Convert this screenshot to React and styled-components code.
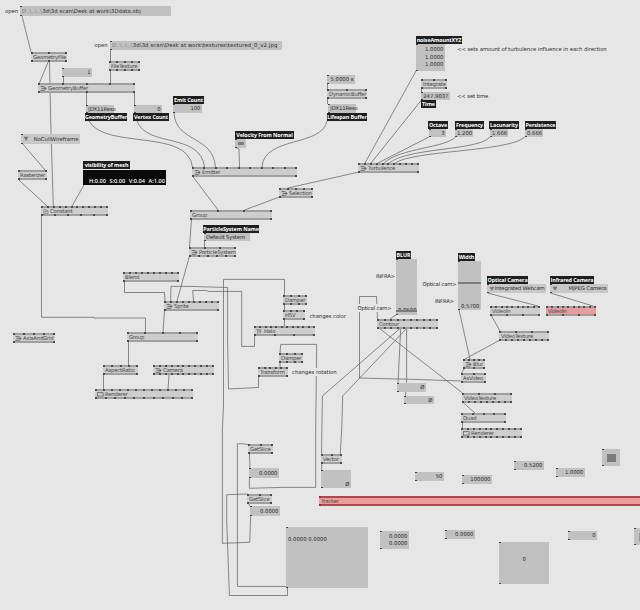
import React from 'react'
import styled, { createGlobalStyle, css } from 'styled-components'

const GlobalStyle = createGlobalStyle`
  body {
    margin: 0;
    background: #e6e6e6;
    overflow: hidden;
  }
`

const Patch = styled.main`
  position: relative;
  width: 640px;
  height: 610px;
  overflow: hidden;
  background: #e6e6e6;
  color: #2c2c2c;
  font-family: "DejaVu Sans", sans-serif;
  font-size: 5.3px;
  line-height: 8px;
  white-space: nowrap;
`

// every item lies freely on the patch
const placed = css`
  position: absolute;
  box-sizing: border-box;
  left: ${p => p.$x}px;
  top: ${p => p.$y}px;
  width: ${p => p.$w}px;
  height: ${p => p.$h}px;
`

const Wires = styled.svg`
  position: absolute;
  left: 0;
  top: 0;
  fill: none;
  stroke: #5c5c5c;
  stroke-width: 0.7;
`

const NodeBox = styled.div`
  ${placed}
  display: flex;
  flex-direction: column;
  justify-content: space-between;
  background: ${p => p.$red ? '#eb9d9d' : '#cecece'};
`

const PinBar = styled.div`
  display: flex;
  justify-content: space-between;
  height: 2px;
  background: ${p => p.$red ? '#b04848' : '#a0a0a0'};
`

const Pin = styled.i`
  width: 2px;
  height: 2px;
  background: ${p => p.$red ? '#923030' : '#4c4c4c'};
`

const NodeName = styled.div`
  display: flex;
  align-items: center;
  gap: 1px;
  height: 6px;
  padding-left: 2px;
  line-height: 6px;
  letter-spacing: -0.18px;
  color: #444;
`

const IOBox = styled.div`
  ${placed}
  display: flex;
  flex-direction: column;
  justify-content: ${p => p.$justify || 'center'};
  padding: 0 1.5px 0 2px;
  background: #c1c1c1;
  line-height: ${p => p.$line || 7}px;
  text-align: ${p => p.$align || 'right'};
  letter-spacing: ${p => p.$spacing || 0}px;

  &::before, &::after {
    content: '';
    position: absolute;
    left: 0;
    width: 2px;
    height: 1px;
    background: #444;
  }
  &::before {
    top: 0;
  }
  &::after {
    bottom: 0;
  }
`

const Faded = styled.span`
  color: #777;
`

const EnumBox = styled(IOBox)`
  flex-direction: row;
  align-items: center;
  justify-content: space-between;
  background: #c8c8c8;
`

const Tag = styled.div`
  ${placed}
  display: flex;
  align-items: center;
  justify-content: center;
  background: #1e1e1e;
  color: #fff;
  font-family: "Open Sans", sans-serif;
  font-weight: 700;
  font-size: 5.4px;
  letter-spacing: -0.11px;
`

const ColorBox = styled.div`
  ${placed}
  display: flex;
  align-items: flex-end;
  justify-content: space-between;
  padding: 0 1px 0 6px;
  background: #0a0a0a;
  color: #fff;
  font-family: "Open Sans", sans-serif;
  font-weight: 600;
  font-size: 5.6px;
  line-height: 7px;
`

const SliderBox = styled(IOBox)`
  padding-bottom: ${p => p.$bottom}px;
`

const SliderBar = styled.div`
  position: absolute;
  left: 0;
  right: 0;
  top: ${p => p.$top}px;
  height: 2px;
  background: #7c7c7c;
`

const ToggleBox = styled(IOBox)`
  align-items: center;
  padding: 0;
`

const ToggleMark = styled.i`
  width: ${p => p.$w}px;
  height: ${p => p.$h}px;
  background: ${p => p.$off ? 'transparent' : '#7d7d7d'};
  box-sizing: border-box;
  border: ${p => p.$off ? '1px solid #999' : 'none'};
`

const Comment = styled.div`
  position: absolute;
  left: ${p => p.$x}px;
  top: ${p => p.$y - 4}px;
  background: #e6e6e6;
  letter-spacing: ${p => p.$spacing || 0}px;
`

const Icon = ({ type }) => {
  if (type === 'window') {
    return <svg width="7" height="5" viewBox="0 0 7 5" fill="none" stroke="#555" strokeWidth=".7"><rect x=".5" y=".7" width="5.6" height="3.4" /></svg>
  }
  if (type === 'page') {
    return <svg width="6" height="5" viewBox="0 0 6 5" fill="none" stroke="#8a8a8a" strokeWidth=".7"><path d="M.7 .5h2.2v4H.7zM2.9 1.5h2v3H2.9M1 2.5h3.5" /></svg>
  }
  if (type === 'fx') {
    return <svg width="7" height="5" viewBox="0 0 7 5" fill="none" stroke="#666" strokeWidth=".7"><path d="M.3 .7h3M1.8 .7v4M4 4.6V1.3q0-.7 1.4-.6M3.3 2.3h2" /></svg>
  }
  if (type === 'down') {
    return <svg width="6" height="6" viewBox="0 0 6 6"><path d="M.5 .8h5L3 5z" fill="#777" /></svg>
  }
  return <svg width="7" height="5" viewBox="0 0 7 5" fill="none" stroke="#444" strokeWidth=".7"><path d="M.6 .6h3.4M1.6 2.4h4.6M.6 4.3h4M4 .6l2 1.8-1.6 1.9" /></svg>
}

const Pins = ({ count, red }) => (
  <PinBar $red={red}>
    {Array.from({ length: count }, (_, i) => <Pin key={i} $red={red} />)}
  </PinBar>
)

const Node = ({ node }) => {
  const [name, x, y, w, ins, outs, icon, red] = node
  const dark = red === 'dark'
  return (
    <NodeBox $x={x} $y={y} $w={w} $h={10} $red={red}>
      <Pins count={ins} red={dark} />
      <NodeName>{icon && <Icon type={icon} />}{name}</NodeName>
      <Pins count={outs} red={dark} />
    </NodeBox>
  )
}

// name, x, y, width, inputs, outputs, icon, red
const nodes = [
  ['GeometryFile', 31, 52, 36, 3, 3],
  ['FileTexture', 109, 61, 31, 5, 5],
  ['GeometryBuffer', 38, 83, 97, 5, 3, 'patch'],
  ['DynamicBuffer', 327, 89, 40, 3, 2],
  ['Integrate', 421, 79, 26, 3, 2],
  ['Emitter', 192, 167, 105, 10, 2, 'patch'],
  ['Turbulence', 358, 163, 61, 11, 2, 'patch'],
  ['Selection', 279, 188, 34, 5, 2, 'patch'],
  ['Group', 190, 210, 82, 4, 2],
  ['ParticleSystem', 189, 247, 47, 4, 6, 'patch'],
  ['Rasterizer', 18, 170, 29, 2, 2],
  ['Constant', 41, 206, 67, 12, 6, 'page'],
  ['Blend', 123, 272, 56, 10, 2],
  ['Sprite', 164, 301, 55, 10, 2, 'patch'],
  ['Group', 127, 332, 71, 5, 2],
  ['AxisAndGrid', 13, 333, 42, 5, 2, 'patch'],
  ['AspectRatio', 103, 365, 35, 5, 2],
  ['Camera', 153, 365, 61, 11, 11, 'patch'],
  ['Renderer', 95, 389, 98, 13, 11, 'window'],
  ['Damper', 283, 295, 24, 4, 4],
  ['HSV', 283, 310, 22, 4, 2],
  ['Halo', 254, 326, 61, 12, 4, 'fx'],
  ['Damper', 279, 353, 24, 4, 4],
  ['Transform', 258, 367, 30, 6, 2],
  ['Contour', 377, 319, 61, 10, 10],
  ['VideoIn', 490, 306, 50, 10, 4],
  ['VideoIn', 546, 306, 50, 10, 4, null, 'light'],
  ['VideoTexture', 499, 331, 50, 4, 9],
  ['Blur', 463, 359, 22, 5, 3, 'patch'],
  ['AsVideo', 461, 373, 25, 3, 2],
  ['VideoTexture', 462, 393, 50, 4, 9],
  ['Quad', 461, 413, 45, 5, 2],
  ['Renderer', 461, 428, 61, 11, 11, 'window'],
  ['GetSlice', 248, 444, 25, 3, 2],
  ['GetSlice', 247, 494, 25, 3, 2],
  ['Vector', 321, 454, 21, 3, 2],
  ['Tracker', 319, 496, 323, 2, 2, null, 'dark'],
]

// value, x, y, width, height, align
const values = [
  ['1', 62, 68, 30, 9],
  ['|DX11Reso', 86, 105, 28, 8, 'left', -0.15],
  ['0', 134, 105, 28, 8],
  ['100', 173, 104, 29, 9],
  ['5.0000 s', 327, 75, 28, 9],
  ['|DX11Reso', 328, 104, 28, 9, 'left', -0.15],
  ['247.9037', 421, 92, 29, 8],
  ['3', 429, 129, 17, 8],
  ['1.200', 455, 129, 18, 8],
  ['1.666', 490, 129, 18, 8],
  ['0.666', 525, 129, 18, 8],
  ['Default System', 204, 233, 46, 8, 'left', -0.13],
  ['Ø', 397, 383, 29, 9],
  ['Ø', 404, 396, 30, 8],
  ['0.0000', 249, 468, 30, 10],
  ['0.0000', 250, 506, 30, 10],
  ['50', 415, 472, 29, 9],
  ['100000', 462, 475, 30, 9],
  ['0.5200', 514, 461, 30, 9],
  ['1.0000', 556, 468, 29, 9],
  ['0.0000', 445, 530, 30, 9],
  ['0', 568, 531, 29, 9],
]

// text, x, y, width, height
const tags = [
  ['GeometryBuffer', 85, 113, 42, 8],
  ['Vertex Count', 133, 113, 36, 8],
  ['Emit Count', 173, 96, 31, 8],
  ['Velocity From Normal', 235, 131, 59, 8],
  ['Lifespan Buffer', 327, 113, 40, 8],
  ['noiseAmountXYZ', 416, 36, 46, 8],
  ['Time', 421, 100, 15, 8],
  ['Octave', 428, 121, 20, 8],
  ['Frequency', 455, 121, 29, 8],
  ['Lacunarity', 489, 121, 30, 8],
  ['Persistence', 525, 121, 31, 8],
  ['visibility of mesh', 83, 161, 47, 8],
  ['ParticleSystem Name', 203, 225, 56, 8],
  ['BLUR', 396, 251, 15, 8],
  ['Width', 458, 253, 17, 8],
  ['Optical Camera', 487, 276, 41, 8],
  ['Infrared Camera', 550, 276, 44, 8],
]

// text, x, middle y, letter spacing
const comments = [
  ['open', 5, 11],
  ['open', 94.5, 45],
  ['<< sets amount of turbulence influence in each direction', 457, 49, -0.05],
  ['<< set time', 457, 96, -0.1],
  ['changes color', 309.5, 315.5, -0.05],
  ['changes rotation', 292, 372],
  ['INFRA>', 376, 276, -0.2],
  ['Optical cam>', 357.5, 308, -0.18],
  ['Optical cam>', 422.5, 284, -0.18],
  ['INFRA>', 435, 301, -0.2],
]

const wires = [
  'M22 16L31 52',
  'M48.5 61L39 84',
  'M49.5 62L50.7 120L53.3 206',
  'M110.5 50V61',
  'M110.5 70V84',
  'M63.5 76V84',
  'M86.5 93V105',
  'M134.5 93V105',
  'M89 121C105 150 188 128 192.5 167',
  'M137 121C147 148 200 132 204.5 167',
  'M174 113C176 143 213 135 215.5 167',
  'M327 121C322 147 264 136 262 167',
  'M327.5 83V89M327.5 98V104',
  'M235.5 147.5L239 149L239.5 167',
  'M192.5 176L218 210',
  'M279.5 197L244.5 210',
  'M359 172L288 188',
  'M416.5 70L365 163',
  'M421.5 88V92M421.5 100L371 163',
  'M429 137L378 163',
  'M455.5 137C445 148 400 148 384 163',
  'M490 137C478 151 410 147 389 163',
  'M525 137C508 152 415 150 395 163',
  'M191.5 219L189.5 247',
  'M204.5 241V247',
  'M189.5 256L177 301',
  'M22 143L45 170',
  'M19 180L47 206',
  'M84 185L72 206',
  'M41.5 215V317.3H94L94 318H145.5V332',
  'M124.5 282V292.5H164.5L165 301',
  'M170.7 301L171 286.4H190L227.6 287.5V338L228.5 389L258.5 387.5V377',
  'M193.5 301L192.7 290.5H206.7L208 291.4H241.7V346.4H254.5V335',
  'M284.5 295V279.4H223.5V405L222.4 430V543.3L249.7 542.3L250.7 516',
  'M164.5 310L163 332',
  'M128.5 342V365',
  'M103.5 375V389',
  'M169 375L168 389',
  'M284.5 305V310M284.5 320V326',
  'M280 353L280.7 344.4H316.7L315.7 430V487.4H281.7L249.4 488.3V478',
  'M280 363V367',
  'M396.5 314.5L390 319',
  'M377.5 319L376.5 296.5H359.5V378L418 379.5L461.7 381',
  'M379 328L462.5 393',
  'M400.5 328L322.4 396L321.5 455',
  'M407 328L342.7 396L341.7 430L340.3 454',
  'M400.7 328L398 384',
  'M406.6 328V380L405.5 397',
  'M459 310L470 359',
  'M500 340L465 359',
  'M464 369L461.5 373',
  'M487.5 293L538 306',
  'M550.5 293L593 306',
  'M491 315L500 331',
  'M462.5 402L475 413',
  'M462.5 422V428',
  'M248.5 444.5L243 443.8H237.4V586.4H287.5',
  'M247.7 494L226.7 494.7V520L229.4 595.5H287.5V587',
  'M249.4 453L250 468',
  'M248 503L250.7 507',
  'M321.7 463V470',
]

const App = () => {
  return (
    <>
      <GlobalStyle />
      <Patch>
        <Wires width="640" height="610" viewBox="0 0 640 610">
          {wires.map(d => <path key={d} d={d} />)}
        </Wires>

        {nodes.map((node, i) => <Node key={i} node={node} />)}

        <IOBox $x={20} $y={6} $w={151} $h={10} $align="left" $spacing={0.06}>
          <div><Faded>D..\..\..\</Faded>3d\3d scan\Desk at work\3Ddata.obj</div>
        </IOBox>
        <IOBox $x={110} $y={41} $w={172} $h={9} $align="left" $spacing={0.12}>
          <div><Faded>D..\..\..\</Faded>3d\3d scan\Desk at work\textures\textured_0_v2.jpg</div>
        </IOBox>
        {values.map(([text, x, y, w, h, align, spacing], i) => (
          <IOBox key={i} $x={x} $y={y} $w={w} $h={h} $align={align} $spacing={spacing}>{text}</IOBox>
        ))}
        <IOBox $x={416} $y={44} $w={29} $h={27} $line={7.7}>
          <div>1.0000</div>
          <div>1.0000</div>
          <div>1.0000</div>
        </IOBox>
        <IOBox $x={380} $y={531} $w={29} $h={18}>
          <div>0.0000</div>
          <div>0.0000</div>
        </IOBox>
        <IOBox $x={321} $y={470} $w={30} $h={18} $justify="flex-end">Ø</IOBox>
        <SliderBox $x={286} $y={527} $w={82} $h={61} $align="left" $bottom={36}>0.0000 0.0000</SliderBox>
        <IOBox $x={499} $y={542} $w={50} $h={42} $align="center">
          <div>0</div>
          <div>&nbsp;</div>
        </IOBox>

        <EnumBox $x={21} $y={134} $w={59} $h={10}><Icon type="down" />NoCullWireframe</EnumBox>
        <EnumBox $x={487} $y={284} $w={59} $h={9} $spacing={-0.15}><Icon type="down" />Integrated Webcam</EnumBox>
        <EnumBox $x={550} $y={284} $w={58} $h={9} $spacing={-0.1}><Icon type="down" />MJPEG Camera</EnumBox>

        <SliderBox $x={396} $y={259} $w={21} $h={56} $justify="flex-end" $bottom={1}>
          0.0500
          <SliderBar $top={51} />
        </SliderBox>
        <SliderBox $x={458} $y={261} $w={23} $h={49} $justify="flex-end" $bottom={0}>
          0.5700
          <SliderBar $top={21} />
        </SliderBox>

        <ToggleBox $x={235} $y={139} $w={11} $h={9}><ToggleMark $w={6} $h={3} /></ToggleBox>
        <ToggleBox $x={602} $y={449} $w={18} $h={17}><ToggleMark $w={9} $h={8} /></ToggleBox>
        <ToggleBox $x={634} $y={528} $w={18} $h={17}><ToggleMark $w={9} $h={8} $off /></ToggleBox>

        <ColorBox $x={83} $y={170} $w={83} $h={15}>
          <span>H:0.00</span><span>S:0.00</span><span>V:0.04</span><span>A:1.00</span>
        </ColorBox>

        {tags.map(([text, x, y, w, h]) => (
          <Tag key={text} $x={x} $y={y} $w={w} $h={h}>{text}</Tag>
        ))}
        {comments.map(([text, x, y, spacing], i) => (
          <Comment key={i} $x={x} $y={y} $spacing={spacing}>{text}</Comment>
        ))}
      </Patch>
    </>
  )
}

export default App
